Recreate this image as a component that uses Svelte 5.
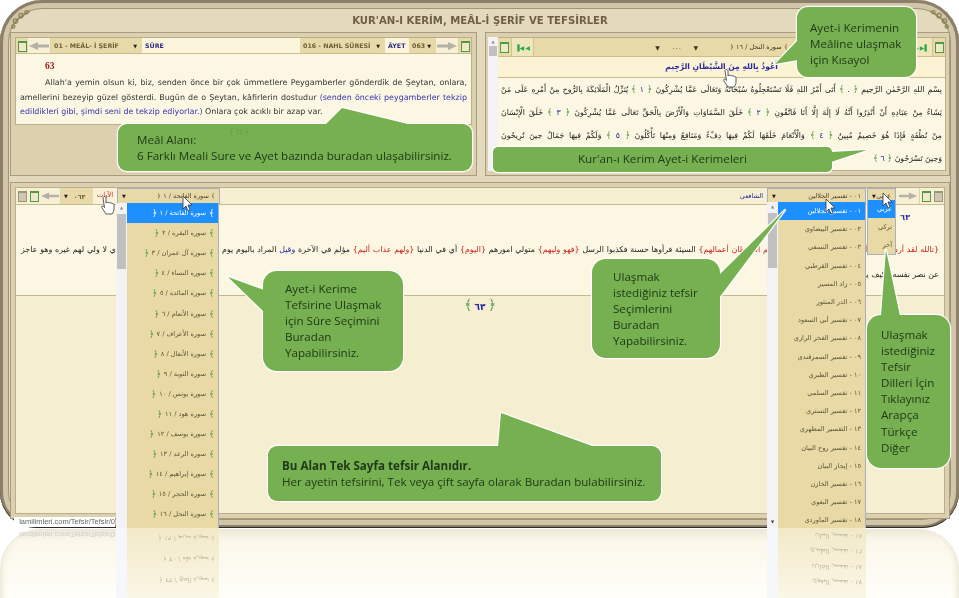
<script>
const suras = [
	"سورة الفاتحة / ١", "سورة البقرة / ٢", "سورة آل عمران / ٣", "سورة النساء / ٤",
	"سورة المائدة / ٥", "سورة الأنعام / ٦", "سورة الأعراف / ٧", "سورة الأنفال / ٨",
	"سورة التوبة / ٩", "سورة يونس / ١٠", "سورة هود / ١١", "سورة يوسف / ١٢",
	"سورة الرعد / ١٣", "سورة إبراهيم / ١٤", "سورة الحجر / ١٥", "سورة النحل / ١٦"
];
const tafsirs = [
	"٠١ - تفسير الجلالين", "٠٢ - تفسير البيضاوي", "٠٣ - تفسير النسفي", "٠٤ - تفسير القرطبي",
	"٠٥ - زاد المسير", "٠٦ - الدر المنثور", "٠٧ - تفسير أبي السعود", "٠٨ - تفسير الفخر الرازي",
	"٠٩ - تفسير السمرقندي", "١٠ - تفسير الطبري", "١١ - تفسير السلمي", "١٢ - تفسير التستري",
	"١٣ - التفسير المظهري", "١٤ - تفسير روح البيان", "١٥ - إيجاز البيان", "١٦ - تفسير الخازن",
	"١٧ - تفسير البغوي", "١٨ - تفسير الماوردي"
];
const langs = ["عربي", "تركي", "آخر"];

const callouts = [
	{x: 118, y: 124, w: 354, h: 47, r: 9, tip: "325,125 342,108 412,125", tx: 19, ty: 8, lines: ["Meâl Alanı:", "6 Farklı Meali Sure ve Ayet bazında buradan ulaşabilirsiniz."]},
	{x: 797, y: 7, w: 119, h: 70, r: 11, tip: "798,40 775,64 798,60", tx: 13, ty: 13, lines: ["Ayet-i Kerimenin", "Meâline ulaşmak", "için Kısayol"]},
	{x: 493, y: 147, w: 339, h: 25, r: 5, tip: "831,152 867,150 831,162", tx: 0, ty: 4, center: true, lines: ["Kur'an-ı Kerim Ayet-i Kerimeleri"]},
	{x: 263, y: 271, w: 140, h: 100, r: 14, tip: "264,290 228,277 264,312", tx: 22, ty: 10, lines: ["Ayet-i Kerime", "Tefsirine Ulaşmak", "için Sûre Seçimini", "Buradan", "Yapabilirsiniz."]},
	{x: 592, y: 259, w: 128, h: 99, r: 14, tip: "719,275 785,210 719,298", tx: 21, ty: 10, lines: ["Ulaşmak", "istediğiniz tefsir", "Seçimlerini", "Buradan", "Yapabilirsiniz."]},
	{x: 867, y: 315, w: 83, h: 153, r: 14, tip: "881,316 886,250 900,316", tx: 14, ty: 12, lines: ["Ulaşmak", "istediğiniz", "Tefsir", "Dilleri İçin", "Tıklayınız", "Arapça", "Türkçe", "Diğer"]},
	{x: 268, y: 446, w: 393, h: 55, r: 9, tip: "498,447 501,413 595,447", tx: 14, ty: 12, lines: ["<b>Bu Alan Tek Sayfa tefsir Alanıdır.</b>", "Her ayetin tefsirini, Tek veya çift sayfa olarak Buradan bulabilirsiniz."]}
];
</script>

<div class="page">
	<div class="frame">
		<svg class="ornament left" viewBox="0 0 20 20"><g fill="none" stroke="#8f8258" stroke-width="1.1"><path d="M2 18c1-5 4-8 7-10s6-4 9-6"/><circle cx="5" cy="11" r="2"/><circle cx="10" cy="6" r="2"/><circle cx="15" cy="3" r="1.5"/><circle cx="3" cy="16" r="1.5"/></g></svg>
		<svg class="ornament right" viewBox="0 0 20 20"><g fill="none" stroke="#8f8258" stroke-width="1.1"><path d="M2 18c1-5 4-8 7-10s6-4 9-6"/><circle cx="5" cy="11" r="2"/><circle cx="10" cy="6" r="2"/><circle cx="15" cy="3" r="1.5"/><circle cx="3" cy="16" r="1.5"/></g></svg>
		<h1>KUR'AN-I KERİM, MEÂL-İ ŞERİF VE TEFSİRLER</h1>

		<div class="top">
			<section class="panel meal">
				<div class="inner">
					<div class="bar mealbar">
						<span class="sq green"></span>
						<span class="arrowbox"><svg width="20" height="8" viewBox="0 0 20 8"><path d="M0 4 9 0v2.5h11v3H9V8z" fill="#b4b2a6"/></svg></span>
						<span class="sel w91">01 - MEÂL- İ ŞERİF<i>▼</i></span>
						<span class="lbl grow">SÛRE</span>
						<span class="sel w85">016 - NAHL SÜRESİ<i>▼</i></span>
						<span class="lbl w24">ÂYET</span>
						<span class="sel w27">063<i>▼</i></span>
						<span class="arrowbox"><svg width="20" height="8" viewBox="0 0 20 8"><path d="M20 4 11 0v2.5H0v3h11V8z" fill="#b4b2a6"/></svg></span>
						<span class="sq green"></span>
					</div>
					<div class="mealtext">
						<div class="num">63</div>
						<p>Allah'a yemin olsun ki, biz, senden önce bir çok ümmetlere Peygamberler gönderdik de Şeytan, onlara, amellerini bezeyip güzel gösterdi. Bugün de o Şeytan, kâfirlerin dostudur <span class="blue">(senden önceki peygamberler tekzip edildikleri gibi, şimdi seni de tekzip ediyorlar.)</span> Onlara çok acıklı bir azap var.</p>
					</div>
				</div>
			</section>

			<section class="panel quran">
				<div class="scroll"><span class="up">▲</span><span class="thumb"></span></div>
				<div class="qcol">
					<div class="bar qbar">
						<span class="sq green"></span>
						<span class="nav"><b>▐◀</b><b>◀</b></span>
						<span class="qcenter" dir="rtl"><span class="sname">﴾ سورة النحل / ١٦ ﴿</span><span class="zeros">▼ ٠٠٠ ▼</span></span>
						<span class="nav"><b>▶</b><b>▶▌</b></span>
						<span class="sq green"></span>
					</div>
					<div class="besmele" dir="rtl">أَعُوذُ بِاللهِ مِنَ الشَّيْطَانِ الرَّجِيمِ</div>
					<div class="ayat" dir="rtl">
						<div>بِسْمِ اللهِ الرَّحْمٰنِ الرَّحِيمِ <em>﴿</em> <u>.</u> <em>﴾</em> أَتَى أَمْرُ اللهِ فَلَا تَسْتَعْجِلُوهُ سُبْحَانَهُ وَتَعَالَى عَمَّا يُشْرِكُونَ <em>﴿</em> <u>١</u> <em>﴾</em> يُنَزِّلُ الْمَلَائِكَةَ بِالرُّوحِ مِنْ أَمْرِهِ عَلَى مَنْ</div>
						<div>يَشَاءُ مِنْ عِبَادِهِ أَنْ أَنْذِرُوا أَنَّهُ لَا إِلَهَ إِلَّا أَنَا فَاتَّقُونِ <em>﴿</em> <u>٢</u> <em>﴾</em> خَلَقَ السَّمَاوَاتِ وَالْأَرْضَ بِالْحَقِّ تَعَالَى عَمَّا يُشْرِكُونَ <em>﴿</em> <u>٣</u> <em>﴾</em> خَلَقَ الْإِنْسَانَ</div>
						<div>مِنْ نُطْفَةٍ فَإِذَا هُوَ خَصِيمٌ مُبِينٌ <em>﴿</em> <u>٤</u> <em>﴾</em> وَالْأَنْعَامَ خَلَقَهَا لَكُمْ فِيهَا دِفْءٌ وَمَنَافِعُ وَمِنْهَا تَأْكُلُونَ <em>﴿</em> <u>٥</u> <em>﴾</em> وَلَكُمْ فِيهَا جَمَالٌ حِينَ تُرِيحُونَ</div>
						<div class="last">وَحِينَ تَسْرَحُونَ <em>﴿</em> <u>٦</u> <em>﴾</em></div>
					</div>
				</div>
			</section>
		</div>

		<section class="panel tafsir">
			<div class="inner tinner">
				<div class="bar tbar">
					<span class="sq gray"></span>
					<span class="sq green"></span>
					<span class="arrowbox"><svg width="18" height="8" viewBox="0 0 20 8"><path d="M0 4 9 0v2.5h11v3H9V8z" fill="#b4b2a6"/></svg></span>
					<span class="sel w32 ar"><i>▼</i>٠٦٣</span>
					<span class="ayatlbl">الآيات</span>
					<span class="head w103"><i>▼</i><span dir="rtl">﴾ سورة الفاتحة / ١ ﴿</span></span>
					<span class="mid"><span>الشافعي</span></span>
					<span class="head w99"><i>▼</i><span dir="rtl">٠١ - تفسير الجلالين</span></span>
					<span class="head w29"><i>▼</i><span>عربي</span></span>
					<span class="arrowbox wide"><svg width="18" height="8" viewBox="0 0 20 8"><path d="M20 4 11 0v2.5H0v3h11V8z" fill="#b4b2a6"/></svg></span>
					<span class="sq green"></span>
					<span class="sq gray"></span>
				</div>
				<div class="tbody" dir="rtl">
					<div class="tnum">٦٣</div>
					<div class="tline"><span class="red">{'{'}تالله لقد أرسلنا إلى أمم من قبلك{'}'}</span> رسلا <span class="red">{'{'}فزين لهم الشيطان أعمالهم{'}'}</span> السيئة فرأوها حسنة فكذبوا الرسل <span class="red">{'{'}فهو وليهم{'}'}</span> متولي امورهم <span class="red">{'{'}اليوم{'}'}</span> أي في الدنيا <span class="red">{'{'}ولهم عذاب أليم{'}'}</span> مؤلم في الآخرة <span class="navy">وقيل</span> المراد باليوم يوم القيامة على حكاية الحال الآتية أي لا ولي لهم غيره وهو عاجز</div>
					<div class="tline2">عن نصر نفسه فكيف ينصرهم</div>
				</div>
				<div class="rosette" dir="rtl"><em>﴿</em> <b>٦٣</b> <em>﴾</em></div>
			</div>

			<div class="menu smenu">
				<div class="mscroll"><span class="up">▲</span><span class="thumb"></span></div>
				<div class="items">
					{#each suras as s, i}
						<div class="item" class:on={i === 0} dir="rtl"><em>﴾</em> {s} <em>﴿</em></div>
					{/each}
				</div>
			</div>
			<div class="menu tmenu">
				<div class="mscroll"><span class="up">▲</span><span class="thumb"></span><span class="down">▼</span></div>
				<div class="items">
					{#each tafsirs as t, i}
						<div class="item" class:on={i === 0} dir="rtl">{t}</div>
					{/each}
				</div>
			</div>
			<div class="menu lmenu">
				<div class="items">
					{#each langs as l, i}
						<div class="item" class:on={i === 0} dir="rtl">{l}</div>
					{/each}
				</div>
			</div>
		</section>
		<div class="status">lamilimleri.com/Tefsir/Tefsir/0</div>
	</div>

	<div class="reflection">
		<div class="ghost">
			<div class="ghoststatus">lamilimleri.com/Tefsir/Tefsir/0</div>
			<div class="ghostmenu gs"><span></span><div dir="rtl"><p>﴾ سورة الحج / ٢٢ ﴿</p><p>﴾ سورة طه / ٢٠ ﴿</p><p>﴾ سورة مريم / ١٩ ﴿</p></div></div>
			<div class="ghostmenu gt"><span></span><div dir="rtl"><p>١٧ - تفسير البغوي</p><p>١٨ - تفسير الخازن</p><p>١٦ - تفسير الطبري</p><p>١٥ - تفسير البيان</p></div></div>
		</div>
	</div>

	<svg class="overlay" width="959" height="598" viewBox="0 0 959 598">
		{#each callouts as c}
			<g fill="#fff" stroke="#fff" stroke-width="2.4" stroke-linejoin="round">
				<rect x={c.x} y={c.y} width={c.w} height={c.h} rx={c.r} />
				<polygon points={c.tip} />
			</g>
			<g fill="#76b051">
				<rect x={c.x} y={c.y} width={c.w} height={c.h} rx={c.r} />
				<polygon points={c.tip} />
			</g>
		{/each}
		<!-- cursors -->
		<g fill="#fff" stroke="#333" stroke-width=".8" stroke-linejoin="round">
			<path d="M725 71c0-2 3-2 3 0v5c1-1 2-1 3 0 1-.6 2-.4 3 .6 1-.3 2 .2 2 1.400v4c0 2-1 4-2 5h-6l-4-6c-1-2 1-2.600 1.500-1.500l1 1z" />
			<path d="M103 198c0-2 3-2 3 0v5c1-1 2-1 3 0 1-.6 2-.4 3 .6 1-.3 2 .2 2 1.400v4c0 2-1 4-2 5h-6l-4-6c-1-2 1-2.600 1.500-1.500l1 1z" />
			<path d="M183 196v13l3-3 2 5 2-1-2-5h4z" />
			<path d="M826 199v13l3-3 2 5 2-1-2-5h4z" />
			<path d="M883 193v13l3-3 2 5 2-1-2-5h4z" />
		</g>
	</svg>

	<div class="mark" dir="rtl">﴿٦٣﴾</div>

	{#each callouts as c}
		<div class="ctext" class:center={c.center} style="left:{c.x + c.tx}px;top:{c.y + c.ty}px;width:{c.center ? c.w : c.w - c.tx}px">
			{#each c.lines as l}<div>{@html l}</div>{/each}
		</div>
	{/each}
</div>

<style>
:global(body) {
	margin: 0;
	background: #fff;
}
.page {
	position: relative;
	width: 959px;
	height: 598px;
	overflow: hidden;
	background: #fff;
	font-family: "DejaVu Sans", sans-serif;
	filter: blur(0.3px);
}
.frame {
	position: relative;
	box-sizing: border-box;
	height: 528px;
	padding: 0 9px 9px 10px;
	background: #e3d9bc;
	border-radius: 42px 42px 36px 36px;
	box-shadow: inset 0 -1px 0 #2d2a25, inset 0 0 0 3px #8d806a, inset 0 0 0 8px #d2c6a8, inset 0 0 0 9px #a0947a;
}
.ornament {
	position: absolute;
	top: 9px;
	width: 22px;
	height: 22px;
}
.ornament.left { left: 10px; }
.ornament.right { right: 9px; transform: scaleX(-1); }
h1 {
	margin: 0;
	height: 32px;
	padding-top: 15px;
	box-sizing: border-box;
	text-align: center;
	font-size: 10.1px;
	line-height: 11px;
	font-weight: bold;
	color: #6e5f45;
}
.top {
	display: grid;
	grid-template-columns: 467px 465px;
	gap: 8px;
	height: 141px;
}
.panel {
	box-sizing: border-box;
	border: 1px solid #a89c80;
	background: #dcd0ae;
	padding: 4px;
}
.inner {
	border: 1px solid #b9ae8e;
	background: #fcf7e2;
}
.bar {
	display: flex;
	align-items: stretch;
	background: #e8daa8;
	border-bottom: 1px solid #c9bc8e;
}
.sq {
	width: 12px;
	flex: none;
	position: relative;
}
.sq::after {
	content: "";
	position: absolute;
	left: 2px;
	top: 50%;
	margin-top: -5px;
	width: 7px;
	height: 8px;
	border: 1px solid #4f9a43;
	border-top-width: 2px;
	background: #efe9c9;
}
.sq.gray::after {
	border-color: #9b957f;
	background: #cfc8ae;
}
.arrowbox {
	width: 22px;
	flex: none;
	display: flex;
	align-items: center;
	justify-content: center;
	background: #f7f0d6;
	border-right: 1px solid #e0d3a2;
}
.tbar .arrowbox { width: 20px; }
.tbar .arrowbox.wide { width: 23px; }
.sel {
	flex: none;
	display: flex;
	align-items: center;
	justify-content: space-between;
	box-sizing: border-box;
	padding: 0 5px 0 3px;
	font-size: 6.3px;
	font-weight: bold;
	color: #6e6038;
	white-space: nowrap;
}
.sel i { font-style: normal; font-size: 5px; color: #222; }
.w91 { width: 91px; }
.w85 { width: 85px; }
.w27 { width: 27px; }
.w32 { width: 32px; }
.lbl {
	display: flex;
	align-items: center;
	padding-left: 3px;
	box-sizing: border-box;
	background: #fbf5dc;
	font-size: 6.3px;
	font-weight: bold;
	color: #2c2a80;
}
.grow { flex: 1; }
.w24 { width: 24px; flex: none; }
.mealbar { height: 15px; }
.mealtext {
	box-sizing: border-box;
	height: 70px;
	padding: 6px 4px 0 4px;
	color: #333;
	font-size: 7.95px;
	line-height: 14.7px;
}
.num {
	padding-left: 25px;
	font-family: "Liberation Serif", serif;
	font-weight: bold;
	font-size: 9.5px;
	line-height: 12px;
	color: #a01818;
	margin-bottom: 4px;
}
.mealtext p {
	margin: 0;
	text-indent: 25px;
	text-align: justify;
}
.blue { color: #3535b5; }

.quran {
	display: flex;
	padding: 4px 3px 4px 2px;
}
.scroll, .mscroll {
	position: relative;
	flex: none;
	background: #f3f3f5;
}
.scroll { width: 10px; }
.mscroll { width: 11px; }
.up, .down {
	position: absolute;
	left: 0;
	right: 0;
	text-align: center;
	font-size: 4px;
	line-height: 8px;
	color: #8a8a8a;
}
.up { top: 1px; }
.down { bottom: 3px; color: #333; }
.thumb {
	position: absolute;
	left: 1px;
	right: 1px;
	top: 9px;
	height: 10px;
	background: #c0c0c0;
}
.mscroll .thumb { top: 11px; height: 55px; }
.qcol {
	flex: 1;
	min-width: 0;
	display: flex;
	flex-direction: column;
	border: 1px solid #b9ae8e;
	border-left: 0;
	background: #fcf7e2;
}
.qbar { height: 18px; flex: none; }
.nav {
	display: flex;
	align-items: center;
	padding: 0 3px;
	gap: 1px;
	font-size: 6px;
	color: #2fa84a;
	background: #efe6bd;
	border: solid #d3c692;
	border-width: 0 1px;
	margin-left: 1px;
}
.nav b { font-weight: normal; }
.qcenter {
	flex: 1;
	display: flex;
	align-items: center;
	justify-content: center;
	gap: 32px;
	font-size: 6.5px;
	color: #3a3420;
	white-space: nowrap;
}
.zeros { font-size: 6px; word-spacing: 10px; }
.besmele {
	flex: none;
	height: 20px;
	line-height: 19px;
	text-align: center;
	font-size: 7.6px;
	font-weight: bold;
	color: #2727a8;
	background: #fbf3d3;
	border-bottom: 1px solid #c9bc8e;
	white-space: nowrap;
}
.ayat {
	padding: 0 3px;
	font-size: 7.8px;
	line-height: 22px;
	color: #222;
}
.ayat div {
	white-space: nowrap;
	text-align: justify;
	text-align-last: justify;
}
.ayat .last { text-align-last: start; }
.ayat em, .rosette em, .item em {
	font-style: normal;
	color: #4f9a4a;
}
.ayat em { font-size: 9px; }
.ayat u {
	text-decoration: none;
	color: #2727a8;
}

.tafsir {
	position: relative;
	margin-top: 9px;
	height: 337px;
}
.tinner {
	box-sizing: border-box;
	height: 100%;
	background: #f5eed1;
}
.tbar {
	height: 16px;
	background: #f6efd2;
}
.ar { justify-content: flex-start; gap: 6px; background: #e8daa8; }
.ayatlbl {
	width: 24px;
	flex: none;
	box-sizing: border-box;
	text-align: center;
	font-size: 7px;
	line-height: 14px;
	color: #c03a2a;
	background: #f9f1d8;
}
.head {
	flex: none;
	box-sizing: border-box;
	display: flex;
	align-items: center;
	justify-content: space-between;
	padding: 0 4px;
	font-size: 6.5px;
	color: #4b452c;
	background: #e8daa8;
	border: 1px solid #a6b1bd;
	white-space: nowrap;
}
.head i { font-style: normal; font-size: 5px; color: #222; }
.w103 { width: 103px; }
.w99 { width: 99px; margin-right: 1px; }
.w29 { width: 29px; }
.mid {
	flex: 1;
	display: flex;
	justify-content: flex-end;
	align-items: center;
	padding-right: 4px;
	font-size: 6.5px;
	color: #2727a8;
}
.tbody {
	box-sizing: border-box;
	height: 91px;
	padding: 9px 5px 0;
	border-bottom: 1px solid #c2b78f;
	background: #fcf7e2;
	color: #222;
	font-size: 7.9px;
	overflow: hidden;
}
.tnum {
	padding-right: 29px;
	margin-top: -2px;
	line-height: 12px;
	color: #2727a8;
	font-weight: bold;
}
.tline {
	margin-top: 20px;
	line-height: 12px;
	white-space: nowrap;
	text-align: justify;
	text-align-last: justify;
}
.tline2 {
	margin-top: 13px;
	line-height: 12px;
	white-space: nowrap;
}
.red { color: #cc2222; }
.navy { color: #2727a8; }
.rosette {
	margin-top: 1px;
	text-align: center;
	font-size: 9px;
	line-height: 16px;
}
.rosette em { font-size: 14px; }
.rosette b { color: #2727a8; }

.menu {
	position: absolute;
	display: flex;
	top: 20px;
	box-sizing: border-box;
	color: #5b5436;
	font-size: 6.6px;
}
.smenu { left: 105px; width: 103px; height: 326px; }
.tmenu { left: 756px; width: 99px; height: 327px; top: 19px; }
.lmenu { left: 856px; width: 29px; height: 55px; top: 17px; border: 1px solid #a6b1bd; border-top: 0; }
.items {
	flex: 1;
	display: flex;
	flex-direction: column;
	min-width: 0;
	background: #e8d9a5;
	border-right: 1px solid #a6b1bd;
}
.lmenu .items { border: 0; }
.item {
	flex: 1;
	display: flex;
	align-items: center;
	gap: 3px;
	padding: 0 4px;
	white-space: nowrap;
}
.item em { font-size: 9px; }
.smenu .item { justify-content: flex-start; flex: none; height: 20.1px; }
.tmenu .item { flex: none; height: 18.2px; }
.lmenu .item { justify-content: flex-start; padding: 0 3px; }
.item.on {
	background: #1e8fff;
	color: #fff;
}
.item.on em { color: #fff; }

.status {
	position: absolute;
	left: 14px;
	bottom: 1px;
	width: 101px;
	height: 10px;
	background: #fff;
	box-sizing: border-box;
	font-family: "Liberation Sans", sans-serif;
	font-size: 7.5px;
	line-height: 10px;
	color: #666;
	text-align: right;
	white-space: nowrap;
	overflow: hidden;
}

.reflection {
	height: 70px;
	overflow: hidden;
}
.ghost {
	position: relative;
	height: 70px;
	margin-top: 1px;
	background: linear-gradient(#ece7d7 0, #f5f1e3 7px, #fbf8ea 12px, #fffef9 70px);
	border-radius: 40px 40px 0 0;
	box-shadow: inset 8px 0 6px -6px #e8e3d2, inset -8px 0 6px -6px #e8e3d2;
}
.ghoststatus {
	position: absolute;
	left: 18px;
	top: 0;
	width: 97px;
	text-align: right;
	overflow: hidden;
	white-space: nowrap;
	font-family: "Liberation Sans", sans-serif;
	font-size: 7.5px;
	line-height: 10px;
	color: #cfcfcf;
	transform: scaleY(-1);
}
.ghostmenu {
	position: absolute;
	top: -1px;
	height: 70px;
	display: flex;
	font-size: 6.6px;
	color: #bdb79f;
}
.ghostmenu span {
	width: 11px;
	flex: none;
	background: #f6f7fa;
}
.ghostmenu > div {
	flex: 1;
	background: linear-gradient(#fbf7e6, #f2e9c8);
	padding: 8px 4px 0;
	transform: scaleY(-1);
	display: flex;
	flex-direction: column;
	justify-content: space-around;
}
.ghostmenu p { margin: 0; }
.gs { left: 116px; width: 103px; }
.gt { left: 767px; width: 99px; }

.overlay {
	position: absolute;
	left: 0;
	top: 0;
	pointer-events: none;
}
.mark {
	position: absolute;
	left: 229px;
	top: 125px;
	font-size: 9px;
	line-height: 14px;
	color: #1d3a1d;
	opacity: .14;
}
.ctext {
	position: absolute;
	box-sizing: border-box;
	font-family: "Open Sans", sans-serif;
	font-size: 11.62px;
	line-height: 16.1px;
	color: #203a18;
	white-space: nowrap;
}
.ctext.center { text-align: center; }
</style>
